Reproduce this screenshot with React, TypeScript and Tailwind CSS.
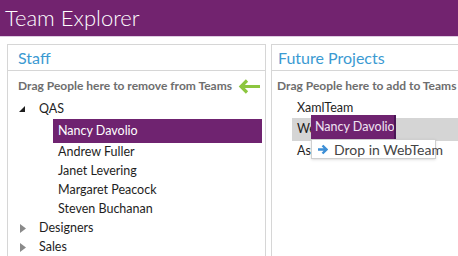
import React from 'react';

const FONT = { fontFamily: 'Lato, "Open Sans", sans-serif' };

const staff = ['Andrew Fuller', 'Janet Levering', 'Margaret Peacock', 'Steven Buchanan'];

const Expanded = () => (
  <svg width="6" height="6" viewBox="0 0 6 6" className="shrink-0">
    <polygon points="6,0 6,6 0,6" fill="#1e1e1e" />
  </svg>
);

const Collapsed = () => (
  <svg width="6" height="9" viewBox="0 0 6 9" className="shrink-0">
    <polygon points="0,0 6,4.5 0,9" fill="#8a8a8a" />
  </svg>
);

const GreenArrow = () => (
  <svg width="23" height="15" viewBox="0 0 23 15" className="shrink-0">
    <path d="M22 7.5H3M9 1.5L3 7.5L9 13.5" fill="none" stroke="#8cc63f" strokeWidth="3.2" />
  </svg>
);

const BlueArrow = () => (
  <svg width="11" height="11" viewBox="0 0 11 11" className="shrink-0">
    <path d="M1 5.5H9M5.5 1.5L9.5 5.5L5.5 9.5" fill="none" stroke="#3d8fd6" strokeWidth="2.4" />
  </svg>
);

const PanelHeader: React.FC<{ title: string; pad: string }> = ({ title, pad }) => (
  <div className={`h-[26px] border-b border-[#d6d6d6] flex items-center text-[16px] text-[#3b9ad2] leading-none whitespace-nowrap ${pad}`}>
    {title}
  </div>
);

export default function App() {
  return (
    <div className="w-[458px] h-[256px] overflow-hidden bg-white text-[#1e1e1e]" style={FONT}>
      {/* Title bar */}
      <div className="h-[37px] bg-[#72236f] border-b border-[#dccbe0] pl-[5px] flex items-center">
        <span className="text-[22px] font-light text-white leading-none whitespace-nowrap">Team Explorer</span>
      </div>

      <div className="flex gap-[5px] pl-[7px] pt-[7px]">
        {/* Staff */}
        <div className="w-[259px] h-[230px] shrink-0 border border-[#d6d6d6] border-b-0">
          <PanelHeader title="Staff" pad="pl-[10px]" />
          <div className="pt-[6px]">
            <div className="h-[18px] pl-[10px] flex items-center gap-[6px] whitespace-nowrap">
              <span className="text-[12px] font-bold text-[#6e6e6e]">Drag People here to remove from Teams</span>
              <GreenArrow />
            </div>
            <div className="mt-[4px] h-[20px] pl-[11px] flex items-center text-[12.5px]">
              <Expanded />
              <span className="ml-[14px]">QAS</span>
            </div>
            <div className="ml-[45px] mr-[3px] h-[24px] bg-[#6f2370] text-white text-[12.5px] pl-[5px] flex items-center whitespace-nowrap">
              Nancy Davolio
            </div>
            {staff.map(name => (
              <div key={name} className="h-[19px] pl-[50px] flex items-center text-[12.5px] whitespace-nowrap">
                {name}
              </div>
            ))}
            {['Designers', 'Sales'].map(name => (
              <div key={name} className="h-[19px] pl-[12px] flex items-center text-[12.5px]">
                <Collapsed />
                <span className="ml-[13px]">{name}</span>
              </div>
            ))}
          </div>
        </div>

        {/* Future Projects */}
        <div className="relative w-[259px] h-[230px] shrink-0 border border-[#d6d6d6] border-b-0">
          <PanelHeader title="Future Projects" pad="pl-[6px]" />
          <div className="pt-[6px]">
            <div className="h-[18px] pl-[5px] flex items-center whitespace-nowrap">
              <span className="text-[12px] font-bold text-[#6e6e6e]">Drag People here to add to Teams</span>
            </div>
            <div className="mt-[3px] h-[20px] pl-[25px] flex items-center text-[12.5px]">XamlTeam</div>
            <div className="ml-[20px] h-[23px] bg-[#d5d5d5] pl-[5px] flex items-center text-[12.5px]">WebTeam</div>
            <div className="h-[21px] pl-[25px] flex items-center text-[12.5px]">AspTeam</div>
          </div>

          {/* Drag ghost */}
          <div className="absolute left-[39px] top-[70px] w-[85px] h-[24px] bg-[#6f2370] border-r-2 border-[#4a1656] pl-[4px] flex items-center text-[12.5px] text-[#f1e4f2] whitespace-nowrap overflow-hidden">
            Nancy Davolio
          </div>
          {/* Drop hint */}
          <div className="absolute left-[39px] top-[94px] w-[125px] h-[20px] bg-white border border-[#cfcfcf] shadow-sm pl-[5px] flex items-center gap-[6px] text-[14px] text-[#444] whitespace-nowrap">
            <BlueArrow />
            <span>Drop in WebTeam</span>
          </div>
        </div>
      </div>
    </div>
  );
}
